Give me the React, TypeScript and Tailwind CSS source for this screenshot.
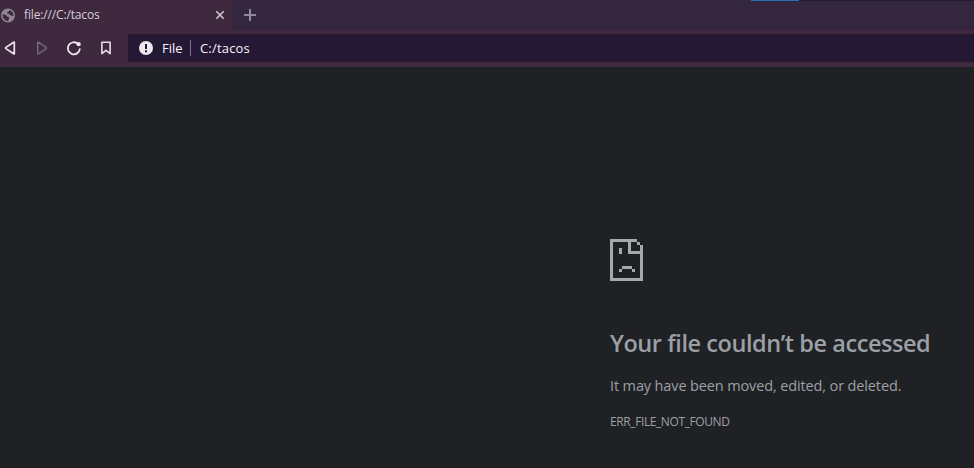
import React from "react";

const SAD_PAGE = [
  "#########..",
  "#.....#..#.",
  "#.....#...#",
  "#..#..#...#",
  "#..#..#####",
  "#.........#",
  "#.........#",
  "#.........#",
  "#.........#",
  "#.........#",
  "#..#......#",
  "#.........#",
  "#.........#",
  "###########",
];

function SadPage() {
  return (
    <svg width="33" height="42" viewBox="0 0 33 42" shapeRendering="crispEdges" className="block text-[#a6a8ab]" fill="currentColor">
      {SAD_PAGE.flatMap((row, y) =>
        row.split("").map((c, x) => (c === "#" ? <rect key={`${x}-${y}`} x={x * 3} y={y * 3} width="3" height="3" /> : null)),
      )}
      <rect x="12" y="27" width="10" height="3" />
      <rect x="22" y="30" width="3" height="3" />
    </svg>
  );
}

function TabStrip() {
  return (
    <div className="flex h-[30px] bg-[#34263f]">
      <div className="flex w-[232px] items-center bg-[#3e293f]">
        <svg width="15" height="15" viewBox="0 0 15 15" className="ml-px shrink-0">
          <circle cx="7" cy="7.5" r="7" fill="#8f868f" />
          <path d="M1.4 6.5 Q4.5 6.2 5.6 7.4 Q6 9 8 9 Q8.6 11 6.8 13.2 Q2 12.6 1.4 6.5Z M8.6 2 Q8.6 3.6 6.8 3.8 Q5.6 4.8 6.6 5.8 Q9 5.4 9.6 7.6 Q11 7.4 12.6 8 Q13 4 8.6 2Z" fill="#3e293f" />
        </svg>
        <span className="ml-2 w-[76px] whitespace-nowrap text-[12px] leading-none tracking-[-0.15px] text-[#d9cfda]">file:///C:/tacos</span>
        <svg width="10" height="10" viewBox="0 0 10 10" className="ml-[115px]" stroke="#d0c5d1" strokeWidth="1.6">
          <path d="M1.3 1.3 8.7 8.7M8.7 1.3 1.3 8.7" />
        </svg>
      </div>
      <div className="flex w-9 items-center justify-center">
        <svg width="12" height="12" viewBox="0 0 12 12" stroke="#92889a" strokeWidth="2" shapeRendering="crispEdges">
          <path d="M6 0V12M0 6H12" />
        </svg>
      </div>
      <div className="ml-[483px] h-px w-12 bg-[#2870ae]" />
      <div className="h-px flex-1 bg-[#231a2d]" />
    </div>
  );
}

function Toolbar() {
  return (
    <div className="flex h-[37px] items-start bg-[#3e293f] pt-1">
      <div className="flex h-7 w-32 items-center">
        <svg width="128" height="28" viewBox="0 0 128 28" fill="none" strokeWidth="1.7" strokeLinejoin="round" strokeLinecap="round">
          <path d="M14.3 8.5V19.5Q14.3 20.2 13.7 19.8L5.9 14.6Q5.3 14 5.9 13.4L13.7 8.2Q14.3 7.8 14.3 8.5Z" stroke="#f0e7f1" />
          <path d="M37.7 8.5V19.5Q37.7 20.2 38.3 19.8L46.1 14.6Q46.7 14 46.1 13.4L38.3 8.2Q37.7 7.8 37.7 8.5Z" stroke="#7a667b" strokeWidth="1.4" />
          <path d="M77.2 9.3A6 6 0 1 0 79.8 15.2" stroke="#f0e7f1" strokeWidth="1.8" />
          <circle cx="78.6" cy="10.2" r="2.1" fill="#f0e7f1" />
          <path d="M101.9 8.2H110.1V19.6L106 16.3 101.9 19.6Z" stroke="#e9dfeb" strokeWidth="1.6" />
        </svg>
      </div>
      <div className="flex h-7 flex-1 items-center rounded-l-[3px] bg-[#241834] leading-none text-[#f8f5fa]">
        <svg width="14" height="14" viewBox="0 0 14 14" className="ml-[11px]">
          <circle cx="7" cy="7" r="7" fill="#ebe8ed" />
          <path d="M6 3H8V8H6ZM6 9.2H8V11.2H6Z" fill="#241834" />
        </svg>
        <span className="ml-[9px] w-[21px] text-[13px]">File</span>
        <span className="ml-[7px] h-4 w-px bg-[#81778a]" />
        <span className="ml-[9px] whitespace-nowrap text-[13px] tracking-[0.18px]">C:/tacos</span>
      </div>
    </div>
  );
}

export default function App() {
  return (
    <div className="flex h-[468px] w-[974px] flex-col overflow-hidden bg-[#202124] font-['Open_Sans','Noto_Sans',sans-serif]">
      <TabStrip />
      <Toolbar />
      <main className="flex flex-1 flex-col items-start pl-[610px] pt-[172px] text-[#9aa0a6]">
        <SadPage />
        <h1 className="mt-[47px] whitespace-nowrap text-[23.5px] font-semibold leading-[30px] tracking-[-0.44px]">Your file couldn’t be accessed</h1>
        <p className="mt-[18px] whitespace-nowrap text-[14.5px] leading-5 tracking-[-0.13px]">It may have been moved, edited, or deleted.</p>
        <p className="mt-[18px] whitespace-nowrap text-[12px] leading-4 tracking-[-0.4px]">ERR_FILE_NOT_FOUND</p>
      </main>
    </div>
  );
}
